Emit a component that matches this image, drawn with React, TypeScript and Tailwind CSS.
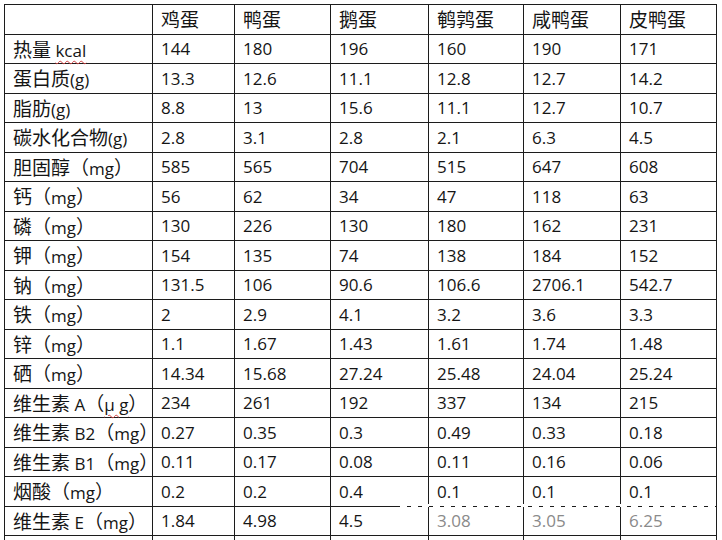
import React from "react";

const header = ["", "鸡蛋", "鸭蛋", "鹅蛋", "鹌鹑蛋", "咸鸭蛋", "皮鸭蛋"];

const rows: string[][] = [
  ["热量 kcal", "144", "180", "196", "160", "190", "171"],
  ["蛋白质(g)", "13.3", "12.6", "11.1", "12.8", "12.7", "14.2"],
  ["脂肪(g)", "8.8", "13", "15.6", "11.1", "12.7", "10.7"],
  ["碳水化合物(g)", "2.8", "3.1", "2.8", "2.1", "6.3", "4.5"],
  ["胆固醇（mg）", "585", "565", "704", "515", "647", "608"],
  ["钙（mg）", "56", "62", "34", "47", "118", "63"],
  ["磷（mg）", "130", "226", "130", "180", "162", "231"],
  ["钾（mg）", "154", "135", "74", "138", "184", "152"],
  ["钠（mg）", "131.5", "106", "90.6", "106.6", "2706.1", "542.7"],
  ["铁（mg）", "2", "2.9", "4.1", "3.2", "3.6", "3.3"],
  ["锌（mg）", "1.1", "1.67", "1.43", "1.61", "1.74", "1.48"],
  ["硒（mg）", "14.34", "15.68", "27.24", "25.48", "24.04", "25.24"],
  ["维生素 A（μ g）", "234", "261", "192", "337", "134", "215"],
  ["维生素 B2（mg）", "0.27", "0.35", "0.3", "0.49", "0.33", "0.18"],
  ["维生素 B1（mg）", "0.11", "0.17", "0.08", "0.11", "0.16", "0.06"],
  ["烟酸（mg）", "0.2", "0.2", "0.4", "0.1", "0.1", "0.1"],
  ["维生素 E（mg）", "1.84", "4.98", "4.5", "3.08", "3.05", "6.25"],
  ["", "", "", "", "", "", ""],
];

const cjkRe = /([\u3000-\u9fff\uff00-\uffef]+)/;

function Mixed({ text, wavy }: { text: string; wavy?: string }) {
  const parts = text.split(cjkRe).filter((p) => p.length > 0);
  return (
    <span className="whitespace-pre">
      {parts.map((p, i) => {
        if (cjkRe.test(p)) {
          return (
            <span key={i} className="text-[19px] font-['Noto_Sans_CJK_SC',sans-serif]">
              {p}
            </span>
          );
        }
        if (wavy && p.includes(wavy)) {
          const idx = p.indexOf(wavy);
          return (
            <span key={i} className="text-[17px] font-['Open_Sans','Liberation_Sans',sans-serif]">
              {p.slice(0, idx)}
              <span className="underline decoration-wavy decoration-[#d04040] decoration-1 underline-offset-[3px]">
                {wavy}
              </span>
              {p.slice(idx + wavy.length)}
            </span>
          );
        }
        return (
          <span key={i} className="text-[17px] font-['Open_Sans','Liberation_Sans',sans-serif]">
            {p}
          </span>
        );
      })}
    </span>
  );
}

export default function App() {
  return (
    <div className="relative w-[722px] h-[540px] overflow-hidden bg-white text-[#151515]">
      <div className="pt-[4px] pl-[4px]">
        <div className="grid grid-cols-[148px_82px_96px_98px_95px_97px_96px] auto-rows-[29.5px] border-l border-t border-[#1c1c1c] w-max">
          {header.map((h, i) => (
            <div
              key={"h" + i}
              className="border-r border-b border-[#1c1c1c] pl-[8px] flex items-center whitespace-nowrap leading-none"
            >
              <Mixed text={h} />
            </div>
          ))}
          {rows.map((r, ri) =>
            r.map((c, ci) => {
              const faded = ri === 16 && ci >= 4;
              return (
                <div
                  key={ri + "-" + ci}
                  className={
                    "border-r border-b border-[#1c1c1c] pl-[8px] flex items-center whitespace-nowrap leading-none " +
                    (faded ? "text-[#8a8a8a]" : "")
                  }
                >
                  {ci === 0 ? (
                    <Mixed
                      text={c}
                      wavy={ri === 0 ? "kcal" : ri === 12 ? "μ g" : undefined}
                    />
                  ) : (
                    <span className="text-[17px] font-['Open_Sans','Liberation_Sans',sans-serif]">
                      {c}
                    </span>
                  )}
                </div>
              );
            })
          )}
        </div>
      </div>
      <div className="absolute left-[400px] top-[504px] w-[322px] h-[3px] bg-[repeating-linear-gradient(90deg,#ffffff_0_7px,transparent_7px_11px)]" />
    </div>
  );
}
